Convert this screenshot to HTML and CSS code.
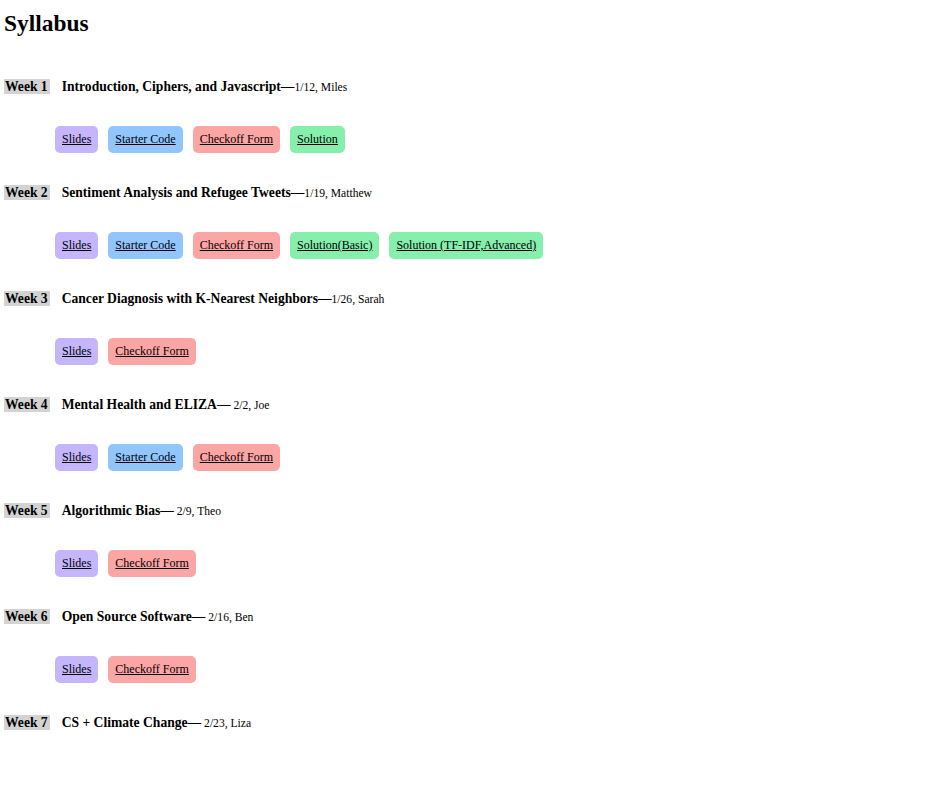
FILE: index.html
```html
<!DOCTYPE html>
<html>
<head>
<meta charset="utf-8">
<title>Syllabus</title>
<link rel="stylesheet" href="styles.css">
</head>
<body>
<h1 class="title">Syllabus</h1>

<section class="week">
  <div class="week-head"><span class="week-num">Week 1</span><span class="topic">Introduction, Ciphers, and Javascript</span>&mdash;<span class="meta">1/12, Miles</span></div>
  <div class="links">
    <a class="btn slides" href="#">Slides</a>
    <a class="btn starter" href="#">Starter Code</a>
    <a class="btn checkoff" href="#">Checkoff Form</a>
    <a class="btn solution" href="#">Solution</a>
  </div>
</section>

<section class="week">
  <div class="week-head"><span class="week-num">Week 2</span><span class="topic">Sentiment Analysis and Refugee Tweets</span>&mdash;<span class="meta">1/19, Matthew</span></div>
  <div class="links">
    <a class="btn slides" href="#">Slides</a>
    <a class="btn starter" href="#">Starter Code</a>
    <a class="btn checkoff" href="#">Checkoff Form</a>
    <a class="btn solution" href="#">Solution(Basic)</a>
    <a class="btn solution" href="#">Solution (TF-IDF,Advanced)</a>
  </div>
</section>

<section class="week">
  <div class="week-head"><span class="week-num">Week 3</span><span class="topic">Cancer Diagnosis with K-Nearest Neighbors</span>&mdash;<span class="meta">1/26, Sarah</span></div>
  <div class="links">
    <a class="btn slides" href="#">Slides</a>
    <a class="btn checkoff" href="#">Checkoff Form</a>
  </div>
</section>

<section class="week">
  <div class="week-head"><span class="week-num">Week 4</span><span class="topic">Mental Health and ELIZA</span>&mdash;<span class="meta"> 2/2, Joe</span></div>
  <div class="links">
    <a class="btn slides" href="#">Slides</a>
    <a class="btn starter" href="#">Starter Code</a>
    <a class="btn checkoff" href="#">Checkoff Form</a>
  </div>
</section>

<section class="week">
  <div class="week-head"><span class="week-num">Week 5</span><span class="topic">Algorithmic Bias</span>&mdash;<span class="meta"> 2/9, Theo</span></div>
  <div class="links">
    <a class="btn slides" href="#">Slides</a>
    <a class="btn checkoff" href="#">Checkoff Form</a>
  </div>
</section>

<section class="week">
  <div class="week-head"><span class="week-num">Week 6</span><span class="topic">Open Source Software</span>&mdash;<span class="meta"> 2/16, Ben</span></div>
  <div class="links">
    <a class="btn slides" href="#">Slides</a>
    <a class="btn checkoff" href="#">Checkoff Form</a>
  </div>
</section>

<section class="week">
  <div class="week-head"><span class="week-num">Week 7</span><span class="topic">CS + Climate Change</span>&mdash;<span class="meta"> 2/23, Liza</span></div>
</section>
</body>
</html>
```

FILE: styles.css
```css
body {
  margin: 0;
  padding: 0 4px;
  font-family: "Liberation Serif", "Times New Roman", serif;
  color: #000;
  background: #fff;
}

.title {
  font-size: 23.4px;
  font-weight: bold;
  margin: 9px 0 0 0;
  line-height: 28px;
}

.week-head {
  font-weight: bold;
  font-size: 13.6px;
  line-height: 17px;
  margin-top: 31px;
  white-space: pre;
}

.title + .week .week-head {
  margin-top: 41px;
}

.week-num {
  background: #d3d3d3;
  padding: 0 2px 0 1px;
  margin-right: 12px;
}

.meta {
  font-weight: normal;
  font-size: 11.6px;
}

.links {
  display: flex;
  gap: 10px;
  padding-left: 51px;
  margin-top: 30px;
}

.btn {
  display: inline-block;
  font-size: 12px;
  line-height: 15px;
  padding: 6px 7px;
  border-radius: 5px;
  color: #000;
  text-decoration: underline;
}

.slides { background: #c4b5fd; }
.starter { background: #93c5fd; }
.checkoff { background: #fca5a5; }
.solution { background: #86efac; }
```
